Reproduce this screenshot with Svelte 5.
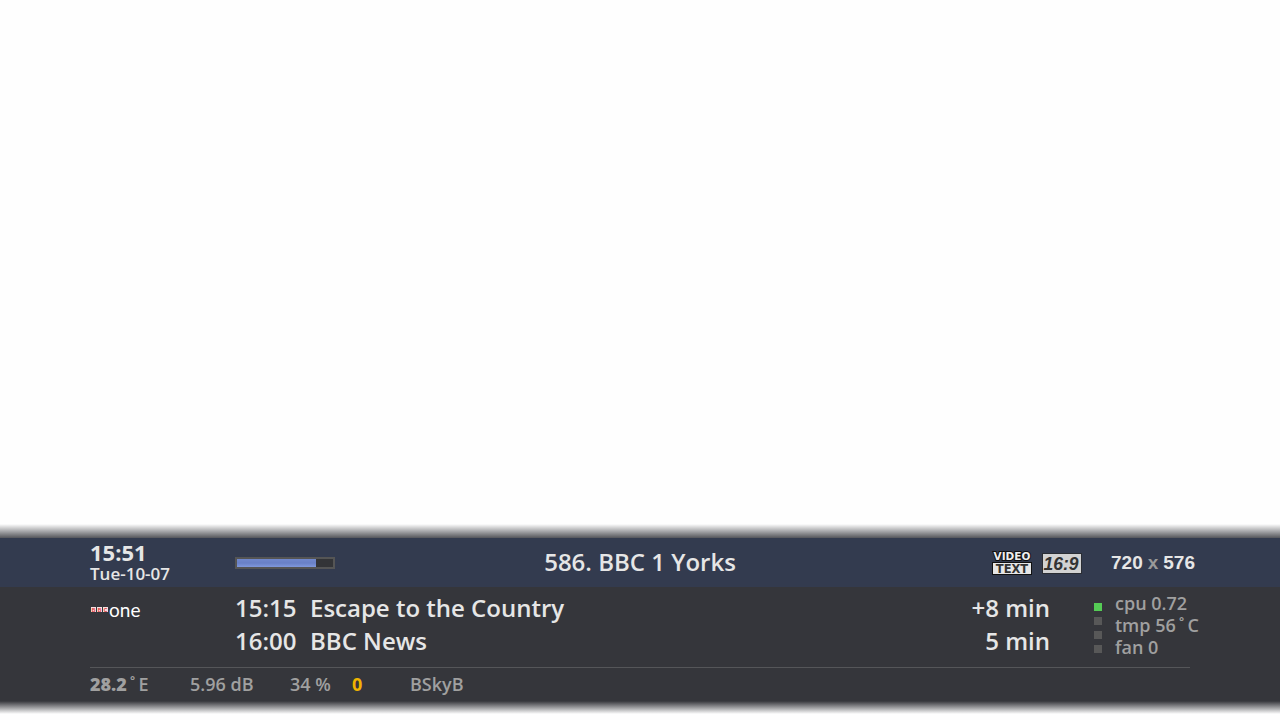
<script lang="ts">
  interface Programme {
    start: string;
    title: string;
    time: string;
  }

  const programmes: Programme[] = [
    { start: '15:15', title: 'Escape to the Country', time: '+8 min' },
    { start: '16:00', title: 'BBC News', time: '5 min' }
  ];

  const leds = [true, false, false, false];

  let progress = $state(82);
</script>

<main class="screen">
  <section class="infobar">
    <div class="fade fade-top"></div>

    <header class="channel">
      <div class="left">
        <div class="clock">
          <time class="time">15:51</time>
          <span class="date">Tue-10-07</span>
        </div>
        <div class="progress" role="progressbar" aria-label="Programme progress" aria-valuenow={progress}>
          <div class="progress-fill" style="width: {progress}%"></div>
        </div>
      </div>

      <h1>586. BBC 1 Yorks</h1>

      <div class="right">
        <svg class="icon" width="40" height="24" viewBox="0 0 40 24" role="img" aria-label="Videotext">
          <text
            x="20" y="9" text-anchor="middle"
            font-family="DejaVu Sans" font-weight="bold" font-size="10.5"
            fill="#eee" stroke="#111" stroke-width="2" paint-order="stroke"
          >VIDEO</text>
          <rect x="0.5" y="11.5" width="39" height="12" fill="#e6e6e6" stroke="#111" />
          <text
            x="20" y="21.5" text-anchor="middle"
            font-family="DejaVu Sans" font-weight="bold" font-size="11.5" fill="#333"
          >TEXT</text>
        </svg>
        <svg class="icon" width="40" height="22" viewBox="0 0 40 22" role="img" aria-label="Widescreen">
          <rect x="0.5" y="1.5" width="39" height="20" fill="#d2d2d2" stroke="#2a2d33" />
          <text
            x="19" y="18" text-anchor="middle"
            font-family="Liberation Sans" font-weight="bold" font-style="italic" font-size="17.5"
            fill="#333"
          >16:9</text>
        </svg>
        <div class="resolution">
          <span>720</span>
          <span class="times">x</span>
          <span>576</span>
        </div>
      </div>
    </header>

    <div class="body">
      <div class="logo">
        <svg class="icon" width="54" height="18" viewBox="0 0 54 18" role="img" aria-label="BBC One">
          {#each ['B', 'B', 'C'] as letter, i}
            <rect x={1 + i * 6} y="3" width="5" height="5" fill="#f6e2e2" />
            <text
              x={3.5 + i * 6} y="7.5" text-anchor="middle"
              font-family="Liberation Sans" font-weight="bold" font-size="5" fill="#d33"
            >{letter}</text>
          {/each}
          <text x="19" y="13" font-family="Lato" font-weight="400" font-size="19" fill="#fff">one</text>
        </svg>
      </div>

      <div class="programmes">
        {#each programmes as programme}
          <div class="programme">
            <time>{programme.start}</time>
            <span class="title">{programme.title}</span>
            <span>{programme.time}</span>
          </div>
        {/each}
      </div>

      <div class="status">
        <div class="leds">
          {#each leds as on}
            <i class="led" class:on></i>
          {/each}
        </div>
        <div class="sensors">
          <span>cpu 0.72</span>
          <span>tmp 56<span class="degree">˚</span>C</span>
          <span>fan 0</span>
        </div>
      </div>
    </div>

    <footer class="signal">
      <span class="orbit"><b>28.2</b><span class="degree">˚</span>E</span>
      <span class="snr">5.96 dB</span>
      <span class="agc">34 %</span>
      <span class="ber">0</span>
      <span>BSkyB</span>
    </footer>

    <div class="fade fade-bottom"></div>
  </section>
</main>

<style>
  :global(body) {
    margin: 0;
    background: #fefefe;
  }

  .screen {
    display: flex;
    flex-direction: column;
    justify-content: flex-end;
    box-sizing: border-box;
    min-height: 100vh;
    padding-bottom: 6px;
    font-family: 'Open Sans', 'Noto Sans', sans-serif;
    font-weight: 600;
    color: #e6e6e6;
  }

  .infobar {
    display: flex;
    flex-direction: column;
  }

  .fade-top {
    height: 14px;
    background: linear-gradient(to bottom, #fefefe, #55565b);
  }

  .fade-bottom {
    height: 13px;
    background: linear-gradient(to bottom, #35363b, #fefefe);
  }

  .channel {
    display: grid;
    grid-template-columns: 1fr auto 1fr;
    align-items: center;
    height: 49px;
    background: #333b4f;
  }

  .left {
    display: flex;
    align-items: center;
    padding-left: 90px;
  }

  .clock {
    display: flex;
    flex-direction: column;
    width: 145px;
  }

  .time {
    font-size: 22px;
    line-height: 22px;
    font-weight: 700;
  }

  .date {
    font-size: 17px;
    line-height: 22px;
  }

  .progress {
    box-sizing: border-box;
    width: 100px;
    height: 12px;
    border: 2px solid #555;
    background: #333437;
  }

  .progress-fill {
    height: 100%;
    background: linear-gradient(to bottom, #7188cd, #6980c6 50%, #8098dc);
  }

  h1 {
    margin: 0;
    padding-bottom: 2px;
    font-size: 24px;
    line-height: 32px;
    font-weight: 600;
  }

  .right {
    display: flex;
    align-items: center;
    justify-content: flex-end;
    gap: 10px;
    padding-right: 85px;
  }

  .icon {
    display: block;
    overflow: visible;
  }

  .resolution {
    display: flex;
    gap: 5px;
    margin-left: 19px;
    font-family: 'Liberation Sans', Arial, sans-serif;
    font-size: 19px;
    font-weight: 700;
    line-height: 24px;
  }

  .times {
    color: #999;
  }

  .body {
    display: flex;
    height: 80px;
    padding-left: 90px;
    background: #35363b;
  }

  .logo {
    width: 145px;
    padding-top: 17px;
  }

  .programmes {
    flex: 1;
    padding-top: 4px;
  }

  .programme {
    display: flex;
    font-size: 24px;
    line-height: 33px;
  }

  .programme time {
    width: 75px;
  }

  .title {
    flex: 1;
  }

  .status {
    display: flex;
    gap: 13px;
    width: 186px;
    padding: 5px 0 0 44px;
  }

  .leds {
    display: flex;
    flex-direction: column;
    gap: 6px;
    padding-top: 11px;
  }

  .led {
    width: 8px;
    height: 8px;
    background: #585858;
  }

  .led.on {
    background: #55cc55;
  }

  .sensors {
    display: flex;
    flex-direction: column;
    font-size: 18px;
    line-height: 22px;
    color: #a0a0a0;
  }

  .degree {
    padding: 0 3px;
  }

  .signal {
    display: flex;
    height: 34px;
    padding: 0 90px;
    background: linear-gradient(#555659, #555659) 90px 0 / calc(100% - 180px) 1px no-repeat #35363b;
    font-size: 18px;
    line-height: 34px;
    color: #a0a0a0;
  }

  .orbit {
    width: 100px;
  }

  .snr {
    width: 100px;
  }

  .agc {
    width: 62px;
  }

  .ber {
    width: 58px;
    font-weight: 700;
    color: #f0b400;
  }
</style>
